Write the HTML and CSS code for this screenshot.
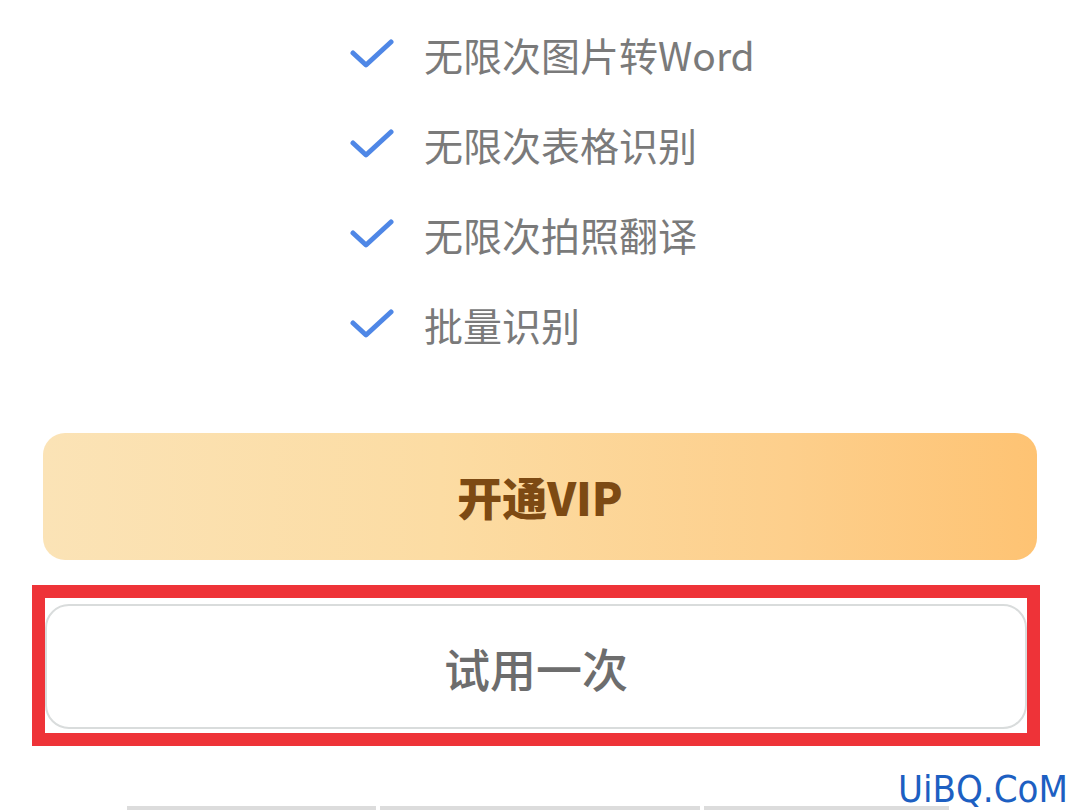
FILE: index.html
```html
<!DOCTYPE html>
<html lang="zh-CN">
<head>
    <meta charset="UTF-8">
    <meta name="viewport" content="width=device-width, initial-scale=1.0">
    <title>开通VIP</title>
    <link rel="stylesheet" href="styles.css">
</head>
<body>
    <div class="page">
        <ul class="features">
            <li>
                <svg class="check" viewBox="0 0 44 30"><path d="M3 14 L16 26 L41 3"/></svg>
                <span>无限次图片转Word</span>
            </li>
            <li>
                <svg class="check" viewBox="0 0 44 30"><path d="M3 14 L16 26 L41 3"/></svg>
                <span>无限次表格识别</span>
            </li>
            <li>
                <svg class="check" viewBox="0 0 44 30"><path d="M3 14 L16 26 L41 3"/></svg>
                <span>无限次拍照翻译</span>
            </li>
            <li>
                <svg class="check" viewBox="0 0 44 30"><path d="M3 14 L16 26 L41 3"/></svg>
                <span>批量识别</span>
            </li>
        </ul>

        <button class="btn-vip">开通VIP</button>

        <div class="highlight">
            <button class="btn-trial">试用一次</button>
        </div>

        <div class="tabs">
            <span></span>
            <span></span>
            <span></span>
        </div>

        <div class="watermark">UiBQ.CoM</div>
    </div>
</body>
</html>
```

FILE: styles.css
```css
body {
    margin: 0;
    background: #fff;
    font-family: "Noto Sans CJK SC", "Noto Sans", sans-serif;
}

.page {
    position: relative;
    width: 1080px;
    height: 810px;
    overflow: hidden;
}

.features {
    list-style: none;
    margin: 0;
    padding: 9px 0 0 350px;
}

.features li {
    display: flex;
    align-items: center;
    height: 90px;
    font-size: 39px;
    color: #7a7a7a;
}

.check {
    width: 44px;
    height: 30px;
    margin-right: 30px;
    fill: none;
    stroke: #4f87e6;
    stroke-width: 5;
    stroke-linecap: round;
    stroke-linejoin: round;
}

.btn-vip {
    display: block;
    width: 994px;
    height: 127px;
    margin: 64px 0 0 43px;
    border: none;
    border-radius: 22px;
    background: linear-gradient(90deg, #fbe3b6 0%, #fcdca3 40%, #fdcf8c 75%, #fec373 100%);
    color: #7d4a13;
    font-family: inherit;
    font-size: 45px;
    font-weight: 900;
}

.highlight {
    width: 982px;
    height: 127px;
    margin: 25px 0 0 32px;
    border: 13px solid #ee3338;
    padding: 6px 0 2px;
    overflow: hidden;
}

.highlight .btn-trial {
    display: block;
    width: 982px;
    height: 125px;
    border: 2px solid #d9dcdc;
    border-radius: 24px;
    background: #fff;
    color: #6d6d6d;
    font-family: inherit;
    font-size: 46px;
    font-weight: 500;
}

.tabs {
    display: flex;
    gap: 4px;
    margin: 60px 0 0 127px;
}

.tabs span {
    height: 6px;
    background: #dcdcdc;
}

.tabs span:nth-child(1) { width: 249px; }
.tabs span:nth-child(2) { width: 320px; }
.tabs span:nth-child(3) { width: 245px; }

.watermark {
    position: absolute;
    right: 12px;
    bottom: -1px;
    font-family: "Liberation Sans Narrow", "DejaVu Sans Condensed", sans-serif;
    font-size: 38px;
    color: #1d5fc2;
}
```
